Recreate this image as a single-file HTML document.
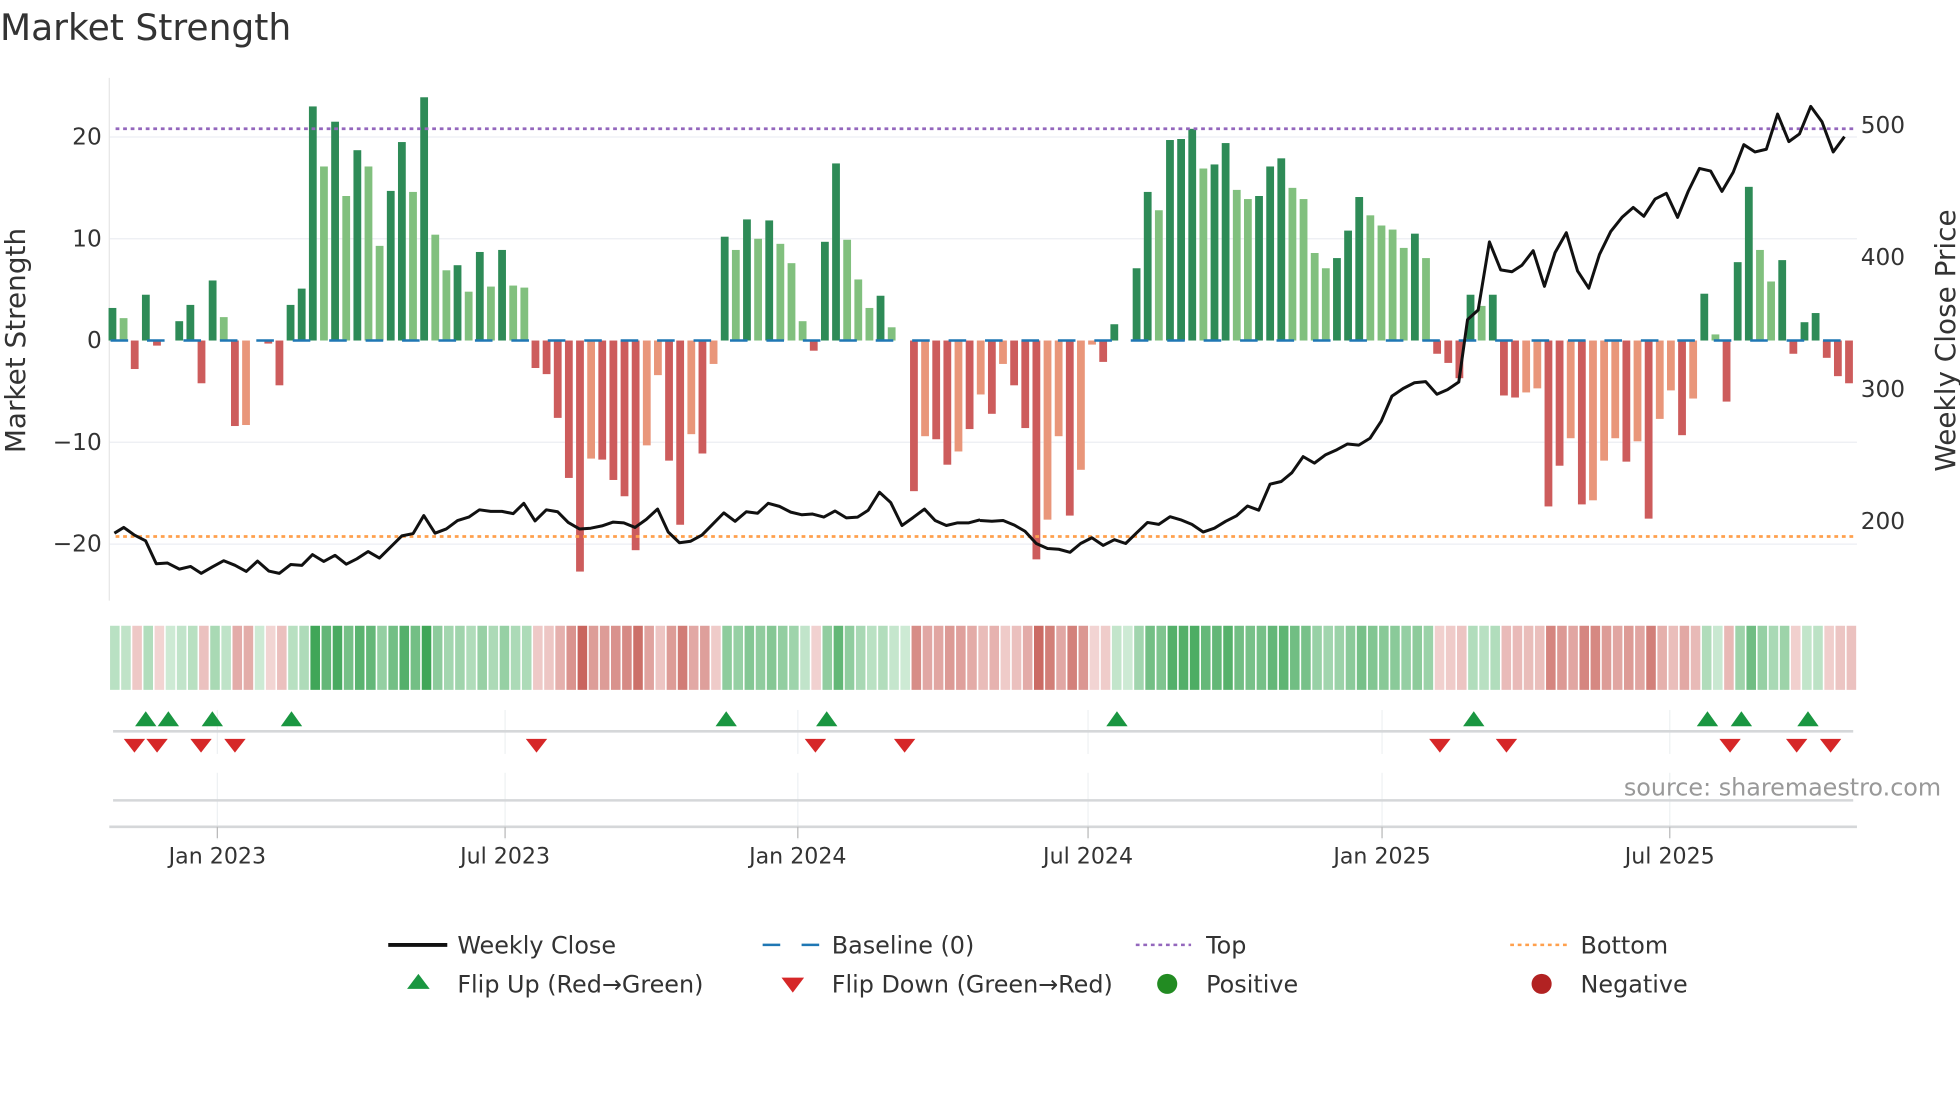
<!DOCTYPE html>
<html><head><meta charset="utf-8"><style>
html,body{margin:0;padding:0;background:#fff;}
svg{display:block;}
text{font-family:"DejaVu Sans","Liberation Sans",sans-serif;}
</style></head><body>
<svg id="s" width="1960" height="1102" viewBox="0 0 1560 877" preserveAspectRatio="none" xmlns="http://www.w3.org/2000/svg">
<rect width="1560" height="877" fill="#fff"/>
<text x="0" y="32" font-size="28.7" fill="#333">Market Strength</text>
<g stroke="#eceef3" stroke-width="1">
<line x1="87" y1="109" x2="1478" y2="109"/><line x1="87" y1="190" x2="1478" y2="190"/>
<line x1="87" y1="352" x2="1478" y2="352"/><line x1="87" y1="433" x2="1478" y2="433"/>
</g>
<line x1="87" y1="62" x2="87" y2="478" stroke="#e6e6e6" stroke-width="1"/>
<g font-size="18.5" fill="#333" text-anchor="end">
<text x="81" y="115">20</text><text x="81" y="196">10</text><text x="81" y="277">0</text>
<text x="81" y="358">−10</text><text x="81" y="439">−20</text>
</g>
<g font-size="18.5" fill="#333">
<text x="1481" y="106">500</text><text x="1481" y="211">400</text><text x="1481" y="316">300</text><text x="1481" y="421">200</text>
</g>
<text transform="translate(20,271) rotate(-90)" font-size="22.2" fill="#333" text-anchor="middle">Market Strength</text>
<text transform="translate(1556,271) rotate(-90)" font-size="22.2" fill="#333" text-anchor="middle">Weekly Close Price</text>
<g id="bars"></g>
<line x1="88" y1="271" x2="1478" y2="271" stroke="#1f77b4" stroke-width="2" stroke-dasharray="14,15"/>
<line x1="92" y1="102.5" x2="1478" y2="102.5" stroke="#9467bd" stroke-width="2.2" stroke-dasharray="3,3"/>
<line x1="92" y1="427" x2="1478" y2="427" stroke="#ffa04d" stroke-width="2.2" stroke-dasharray="3,3"/>
<polyline transform="scale(0.4975,0.3046)" vector-effect="non-scaling-stroke" fill="none" stroke="#111" stroke-width="3" stroke-linejoin="round" points="183,1393 198,1378 215,1398 233,1413 250,1473 268,1471 287,1487 305,1480 322,1498 340,1481 358,1465 376,1477 394,1493 412,1466 430,1492 447,1498 465,1475 483,1477 500,1449 518,1467 536,1451 554,1474 571,1460 589,1441 607,1458 625,1429 643,1400 661,1394 678,1347 696,1393 714,1382 732,1360 750,1351 767,1332 785,1336 803,1336 821,1342 838,1315 856,1361 874,1332 892,1337 909,1365 927,1382 945,1380 963,1374 981,1364 998,1366 1016,1378 1034,1357 1052,1330 1069,1390 1087,1418 1105,1414 1123,1398 1140,1370 1158,1340 1176,1362 1194,1337 1212,1341 1229,1315 1247,1323 1265,1338 1283,1345 1300,1343 1318,1351 1336,1335 1354,1353 1372,1351 1389,1333 1407,1286 1425,1313 1443,1373 1461,1352 1479,1330 1496,1360 1514,1373 1532,1366 1550,1366 1568,1358"/>
<polyline transform="translate(780,0) scale(0.4975,0.3046)" vector-effect="non-scaling-stroke" fill="none" stroke="#111" stroke-width="3" stroke-linejoin="round" points="0,1360 19,1362 37,1360 55,1372 72,1388 90,1420 108,1433 126,1435 144,1443 161,1420 179,1405 197,1425 215,1410 233,1420 250,1393 268,1365 286,1370 304,1350 321,1358 339,1370 357,1390 375,1380 393,1362 410,1348 428,1322 446,1333 464,1265 482,1258 499,1235 517,1193 535,1210 553,1188 571,1175 588,1160 606,1163 624,1145 642,1100 659,1035 677,1015 695,1000 713,997 731,1030 748,1018 766,998 780,835 797,810 815,632 833,705 851,710 867,693 885,655 903,748 920,660 938,608 956,708 974,753 991,665 1009,605 1027,568 1045,542 1062,565 1080,520 1098,505 1116,568 1133,500 1151,440 1169,447 1187,500 1205,450 1222,378 1240,397 1258,390 1276,298 1294,370 1311,350 1329,278 1347,318 1365,397 1383,357"/>
<g id="strip"></g>
<g stroke="#eef1f3" stroke-width="1">
<line x1="173" y1="565" x2="173" y2="600"/><line x1="402" y1="565" x2="402" y2="600"/><line x1="635" y1="565" x2="635" y2="600"/>
<line x1="866" y1="565" x2="866" y2="600"/><line x1="1100" y1="565" x2="1100" y2="600"/><line x1="1329" y1="565" x2="1329" y2="600"/>
<line x1="173" y1="615" x2="173" y2="668"/><line x1="402" y1="615" x2="402" y2="668"/><line x1="635" y1="615" x2="635" y2="668"/>
<line x1="866" y1="615" x2="866" y2="668"/><line x1="1100" y1="615" x2="1100" y2="668"/><line x1="1329" y1="615" x2="1329" y2="668"/>
</g>
<line x1="90" y1="582" x2="1475" y2="582" stroke="#d5d7d9" stroke-width="2"/>
<line x1="90" y1="637" x2="1475" y2="637" stroke="#d5d7d9" stroke-width="2"/>
<line x1="87" y1="658" x2="1478" y2="658" stroke="#d5d7d9" stroke-width="2"/>
<g stroke="#bbb" stroke-width="1">
<line x1="173" y1="658" x2="173" y2="667"/><line x1="402" y1="658" x2="402" y2="667"/><line x1="635" y1="658" x2="635" y2="667"/>
<line x1="866" y1="658" x2="866" y2="667"/><line x1="1100" y1="658" x2="1100" y2="667"/><line x1="1329" y1="658" x2="1329" y2="667"/>
</g>
<g id="marks"></g>
<g font-size="17.6" fill="#333" text-anchor="middle">
<text x="173" y="687">Jan 2023</text><text x="402" y="687">Jul 2023</text><text x="635" y="687">Jan 2024</text>
<text x="866" y="687">Jul 2024</text><text x="1100" y="687">Jan 2025</text><text x="1329" y="687">Jul 2025</text>
</g>
<text x="1545" y="633" font-size="19" fill="#999" text-anchor="end">source: sharemaestro.com</text>
<g font-size="19" fill="#333">
<line x1="309" y1="752" x2="356" y2="752" stroke="#111" stroke-width="3"/>
<text x="364" y="759">Weekly Close</text>
<line x1="607" y1="752" x2="652" y2="752" stroke="#1f77b4" stroke-width="2" stroke-dasharray="14,17"/>
<text x="662" y="759">Baseline (0)</text>
<line x1="904" y1="752" x2="948" y2="752" stroke="#9467bd" stroke-width="2" stroke-dasharray="3,3"/>
<text x="960" y="759">Top</text>
<line x1="1202" y1="752" x2="1247" y2="752" stroke="#ffa04d" stroke-width="2" stroke-dasharray="3,3"/>
<text x="1258" y="759">Bottom</text>
<polygon points="333,775 342,787 324,787" fill="#1a9641"/>
<text x="364" y="790">Flip Up (Red→Green)</text>
<polygon points="622,778 640,778 631,790" fill="#d62728"/>
<text x="662" y="790">Flip Down (Green→Red)</text>
<circle cx="929" cy="783" r="8" fill="#228b22"/>
<text x="960" y="790">Positive</text>
<circle cx="1227" cy="783" r="8" fill="#b22222"/>
<text x="1258" y="790">Negative</text>
</g>
</svg>
<script>
var v=[3.2,2.2,-2.8,4.5,-0.5,0,1.9,3.5,-4.2,5.9,2.3,-8.4,-8.3,0,-0.3,-4.4,3.5,5.1,23,17.1,21.5,14.2,18.7,17.1,9.3,14.7,19.5,14.6,23.9,10.4,6.9,7.4,4.8,8.7,5.3,8.9,5.4,5.2,-2.7,-3.3,-7.6,-13.5,-22.7,-11.6,-11.7,-13.7,-15.3,-20.6,-10.3,-3.4,-11.8,-18.1,-9.2,-11.1,-2.3,10.2,8.9,11.9,10,11.8,9.5,7.6,1.9,-1,9.7,17.4,9.9,6,3.2,4.4,1.3,0,-14.8,-9.4,-9.7,-12.2,-10.9,-8.7,-5.3,
-7.2,-2.3,-4.4,-8.6,-21.5,-17.6,-9.4,-17.2,-12.7,-0.4,-2.1,1.6,0,7.1,14.6,12.8,19.7,19.8,20.8,16.9,17.3,19.4,14.8,13.9,14.2,17.1,17.9,15,13.9,8.6,7.1,8.1,10.8,14.1,12.3,11.3,10.9,9.1,10.5,8.1,-1.3,-2.2,-3.7,4.5,3.4,4.5,-5.4,-5.6,-5.1,-4.7,-16.3,-12.3,-9.6,-16.1,-15.7,-11.8,-9.6,-11.9,-9.9,-17.5,-7.7,-4.9,-9.3,-5.7,4.6,0.6,-6,7.7,15.1,8.9,5.8,7.9,-1.3,1.8,2.7,-1.7,-3.5,-4.2];
var sh="dldddddddd"+"ldlddddddl"+"dldllddldl"+"ldldldlldd"+"dddlddddll"+"ddldldldld"+"llldddllld"+"lddlddldld"+"ldddlldlld"+"ddddldddld"+"dlldddllll"+"dddlllldld"+"dddldddlld"+"dldllldldl"+"ldldldddll"+"ddddddd";
var NS="http://www.w3.org/2000/svg";
function R(g,x,y,w,h,f){var r=document.createElementNS(NS,"rect");r.setAttribute("x",x);r.setAttribute("y",y);r.setAttribute("width",w);r.setAttribute("height",h);r.setAttribute("fill",f);g.appendChild(r);}
function mix(a,b,t){var c=[];for(var i=0;i<3;i++)c.push(Math.round(a[i]+(b[i]-a[i])*t));return "rgb("+c.join(",")+")";}
var bars=document.getElementById("bars"),strip=document.getElementById("strip");
for(var i=0;i<v.length;i++){
 var x=89.5+8.86*i,val=v[i],d=sh[i]=="d";
 if(val!=0){
  var h=Math.abs(val)*8.1,y=val>0?271-h:271;
  var f=val>0?(d?"#2e8b57":"#81c07e"):(d?"#cd5c5c":"#e9967a");
  R(bars,x-3.1,y,6.2,h,f);
 }
 var t=Math.min(Math.abs(val)/23,1);
 var c=val>=0?mix([205,234,212],[64,166,88],t):mix([243,214,213],[200,100,92],t);
 R(strip,87+8.86*i+0.6,498,7.6,51,c);
}
var m=document.getElementById("marks");
[116,134,169,232,578,658,889,1173,1359,1386,1439].forEach(function(x){var p=document.createElementNS(NS,"polygon");p.setAttribute("points",(x)+",566 "+(x+8.5)+",578 "+(x-8.5)+",578");p.setAttribute("fill","#1a9641");m.appendChild(p);});
[107,125,160,187,427,649,720,1146,1199,1377,1430,1457].forEach(function(x){var p=document.createElementNS(NS,"polygon");p.setAttribute("points",(x-8.5)+",588 "+(x+8.5)+",588 "+x+",599");p.setAttribute("fill","#d62728");m.appendChild(p);});
</script>
</body></html>
